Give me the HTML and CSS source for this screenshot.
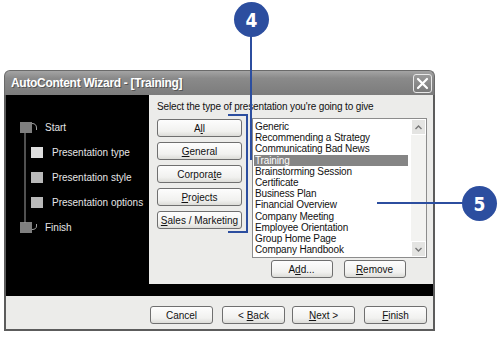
FILE: index.html
```html
<!DOCTYPE html>
<html lang="en">
<head>
    <meta charset="UTF-8">
    <title>AutoContent Wizard</title>
    <link rel="stylesheet" href="styles.css">
</head>
<body>
    <div class="wizard">
        <header class="titlebar">
            <span class="title">AutoContent Wizard - [Training]</span>
            <button class="close" aria-label="Close">
                <svg width="13" height="13" viewBox="0 0 13 13"><path d="M2 2 L11 11 M11 2 L2 11" stroke="#fff" stroke-width="2.2" stroke-linecap="round"/></svg>
            </button>
        </header>
        <div class="body">
            <aside class="steps">
                <svg class="tree" width="30" height="115" viewBox="0 0 30 115">
                    <path d="M7 11 L7 101" fill="none" stroke="#a0a0a0" stroke-width="1"/>
                    <path d="M14 1.5 Q18.5 1.5 18.5 6 L18.5 8" fill="none" stroke="#a0a0a0" stroke-width="1"/>
                    <path d="M18.5 102 L18.5 104 Q18.5 107.5 14 107.5" fill="none" stroke="#a0a0a0" stroke-width="1"/>
                </svg>
                <div class="step main"><span class="box dark"></span>Start</div>
                <div class="step sub"><span class="box light"></span>Presentation type</div>
                <div class="step sub"><span class="box mid"></span>Presentation style</div>
                <div class="step sub"><span class="box mid"></span>Presentation options</div>
                <div class="step main"><span class="box dark"></span>Finish</div>
            </aside>
            <section class="panel">
                <p class="prompt">Select the type of presentation you're going to give</p>
                <div class="picker">
                    <div class="types">
                        <button class="btn">A<u>l</u>l</button>
                        <button class="btn"><u>G</u>eneral</button>
                        <button class="btn">Corpora<u>t</u>e</button>
                        <button class="btn"><u>P</u>rojects</button>
                        <button class="btn"><u>S</u>ales / Marketing</button>
                    </div>
                    <div class="listcol">
                        <div class="list">
                            <ul class="items">
                                <li>Generic</li>
                                <li>Recommending a Strategy</li>
                                <li>Communicating Bad News</li>
                                <li class="selected">Training</li>
                                <li>Brainstorming Session</li>
                                <li>Certificate</li>
                                <li>Business Plan</li>
                                <li>Financial Overview</li>
                                <li>Company Meeting</li>
                                <li>Employee Orientation</li>
                                <li>Group Home Page</li>
                                <li>Company Handbook</li>
                            </ul>
                            <div class="scrollbar">
                                <span class="arrow"><svg width="7" height="5" viewBox="0 0 7 5"><path d="M0.5 4 L3.5 1 L6.5 4" fill="none" stroke="#777" stroke-width="1.4"/></svg></span>
                                <span class="track"></span>
                                <span class="arrow"><svg width="7" height="5" viewBox="0 0 7 5"><path d="M0.5 1 L3.5 4 L6.5 1" fill="none" stroke="#777" stroke-width="1.4"/></svg></span>
                            </div>
                        </div>
                        <div class="listbtns">
                            <button class="btn">A<u>d</u>d...</button>
                            <button class="btn"><u>R</u>emove</button>
                        </div>
                    </div>
                </div>
            </section>
        </div>
        <footer class="footer">
            <button class="btn">Cancel</button>
            <button class="btn">&lt; <u>B</u>ack</button>
            <button class="btn next"><u>N</u>ext &gt;</button>
            <button class="btn"><u>F</u>inish</button>
        </footer>
    </div>

    <!-- callouts -->
    <div class="callout c4">4</div>
    <div class="line l4"></div>
    <div class="bracket"></div>
    <div class="callout c5">5</div>
    <div class="line l5"></div>
</body>
</html>
```
FILE: styles.css
```css
body {
    margin: 0;
    background: #fff;
    font-family: "Liberation Sans", Arial, sans-serif;
    font-size: 10px;
    color: #111;
    position: relative;
    width: 500px;
    height: 337px;
    overflow: hidden;
}

button {
    font-family: inherit;
}

.wizard {
    margin: 70px 0 0 4px;
    width: 431px;
    height: 261px;
    display: flex;
    flex-direction: column;
    box-sizing: border-box;
}

.titlebar {
    height: 24px;
    background: linear-gradient(#a4a4a4, #8a8a8a 30%, #7c7c7c);
    border-radius: 6px 6px 0 0;
    border: 1px solid #6a6a6a;
    border-bottom: none;
    display: flex;
    align-items: center;
    justify-content: space-between;
    padding: 0 2px 0 6px;
}

.title {
    color: #fff;
    font-weight: bold;
    font-size: 12px;
    text-shadow: 1px 1px 0 #555;
    letter-spacing: -0.3px;
}

.close {
    width: 19px;
    height: 19px;
    padding: 0;
    border: 1px solid #e8e8e8;
    border-radius: 3px;
    background: linear-gradient(#9a9a9a, #7a7a7a);
    display: flex;
    align-items: center;
    justify-content: center;
}

.body {
    flex: 1;
    display: flex;
    background: #000;
    border-left: 2px solid #5c5c5c;
    border-right: 2px solid #5c5c5c;
    padding-bottom: 12px;
}

.steps {
    width: 143px;
    position: relative;
    padding-top: 20px;
    color: #e6e6e6;
    font-size: 10px;
}

.tree {
    position: absolute;
    left: 12px;
    top: 27px;
}

.step {
    display: flex;
    align-items: center;
    height: 25px;
}

.step.main {
    padding-left: 14px;
}

.step.sub {
    padding-left: 25px;
}

.box {
    width: 12px;
    height: 11px;
    margin-right: 13px;
}

.step.sub .box {
    margin-right: 9px;
}

.box.dark { background: #7f7f7f; }
.box.light { background: #dedede; }
.box.mid { background: #b9b9b9; }

.panel {
    flex: 1;
    background: #ececea;
    padding: 6px 6px 0 8px;
}

.prompt {
    margin: 0 0 6px;
    font-size: 10px;
    letter-spacing: -0.15px;
}

.picker {
    display: flex;
    gap: 10px;
}

.types {
    width: 85px;
    display: flex;
    flex-direction: column;
    gap: 5px;
    padding-top: 1px;
}

.btn {
    height: 18px;
    padding: 0;
    border: 1px solid #6f6f6f;
    border-radius: 3px;
    background: linear-gradient(#fdfdfd, #f1f1ef 70%, #dcdcd8);
    font-size: 10px;
    color: #111;
}

.listcol {
    width: 175px;
}

.list {
    height: 140px;
    border: 1px solid #8c8c8c;
    background: #fff;
    display: flex;
    box-sizing: border-box;
}

.items {
    flex: 1;
    list-style: none;
    margin: 0;
    padding: 2px 0 0 1px;
    line-height: 11.2px;
    font-size: 10px;
    letter-spacing: -0.15px;
}

.items li {
    padding-left: 1px;
    margin-right: 3px;
}

.items .selected {
    background: #858585;
    color: #fff;
}

.scrollbar {
    width: 15px;
    background: #f3f3f1;
    display: flex;
    flex-direction: column;
}

.scrollbar .arrow {
    height: 14px;
    background: #e4e4e2;
    display: flex;
    align-items: center;
    justify-content: center;
    border: 1px solid #fff;
}

.scrollbar .track {
    flex: 1;
}

.listbtns {
    display: flex;
    justify-content: center;
    gap: 11px;
    margin-top: 2px;
    padding-right: 3px;
}

.listbtns .btn {
    width: 62px;
}

.footer {
    height: 35px;
    background: #ececea;
    border: 2px solid #5c5c5c;
    border-top: none;
    display: flex;
    align-items: flex-start;
    justify-content: flex-end;
    gap: 9px;
    padding: 10px 6px 0 0;
    box-sizing: border-box;
}

.footer .btn {
    width: 63px;
    height: 18px;
}

.footer .next {
    margin-left: -2px;
}

.callout {
    position: absolute;
    width: 35px;
    height: 35px;
    border-radius: 50%;
    background: #2c4e9f;
    color: #fff;
    font-family: "DejaVu Sans Condensed", "Liberation Sans Narrow", sans-serif;
    font-weight: bold;
    font-size: 19px;
    display: flex;
    align-items: center;
    justify-content: center;
}

.c4 { left: 234px; top: 2px; }
.c5 { left: 462px; top: 186px; }

.line {
    position: absolute;
    background: #2c4e9f;
}

.l4 { left: 250px; top: 36px; width: 2px; height: 124px; }
.l5 { left: 377px; top: 202px; width: 86px; height: 2px; }

.bracket {
    position: absolute;
    left: 228px;
    top: 114px;
    width: 18px;
    height: 115px;
    border: 2px solid #2c4e9f;
    border-left: none;
}
```
